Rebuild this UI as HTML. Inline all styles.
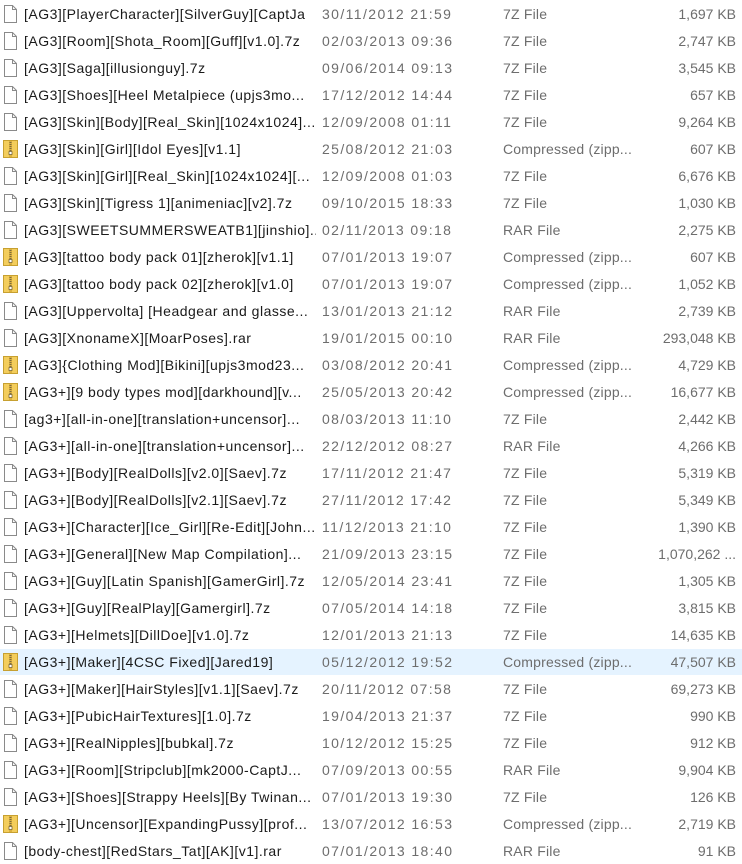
<!DOCTYPE html>
<html><head><meta charset="utf-8"><style>
body{margin:0;width:742px;height:862px;background:#fff;overflow:hidden;font-family:"Liberation Sans",sans-serif;font-size:14px}
.r{position:absolute;left:0;width:742px;height:26px;line-height:26px;white-space:nowrap}
.r.h{background:#e5f3ff}
.i{position:absolute;left:3px;top:4px;width:15px;height:18px}
.n{position:absolute;left:24px;color:#1a1a1a;width:292px;overflow:hidden;letter-spacing:0.5px}
.d{position:absolute;left:322px;color:#6d6d6d;letter-spacing:1.4px}
.t{position:absolute;left:503px;color:#6d6d6d;letter-spacing:0.2px}
.s{position:absolute;right:6px;color:#6d6d6d}
</style></head><body>
<svg width="0" height="0" style="position:absolute"><defs>
<g id="f"><path d="M1.5 0.5h8l4 4v13h-12z" fill="#fff" stroke="#8a8a8a"/><path d="M9.5 0.5v4h4" fill="none" stroke="#8a8a8a"/></g>
<g id="z"><path d="M0.5 0.5h14v17h-14z" fill="#f3cd5c" stroke="#c7a030"/><path d="M6 1h3v16h-3z" fill="#dcb13f"/><path d="M6.5 2h2v1h-2zM6.5 4h2v1h-2zM6.5 6h2v1h-2zM6.5 8h2v1h-2zM6.5 10h2v1h-2z" fill="#7a6a40"/><rect x="6" y="11.5" width="3" height="3" fill="#fff" stroke="#6a5a30" stroke-width="0.7"/></g>
</defs></svg>
<div id="c"></div>
<script>
var rows=[
["f","[AG3][PlayerCharacter][SilverGuy][CaptJa","30/11/2012 21:59","7Z File","1,697 KB"],
["f","[AG3][Room][Shota_Room][Guff][v1.0].7z","02/03/2013 09:36","7Z File","2,747 KB"],
["f","[AG3][Saga][illusionguy].7z","09/06/2014 09:13","7Z File","3,545 KB"],
["f","[AG3][Shoes][Heel Metalpiece (upjs3mo...","17/12/2012 14:44","7Z File","657 KB"],
["f","[AG3][Skin][Body][Real_Skin][1024x1024]...","12/09/2008 01:11","7Z File","9,264 KB"],
["z","[AG3][Skin][Girl][Idol Eyes][v1.1]","25/08/2012 21:03","Compressed (zipp...","607 KB"],
["f","[AG3][Skin][Girl][Real_Skin][1024x1024][...","12/09/2008 01:03","7Z File","6,676 KB"],
["f","[AG3][Skin][Tigress 1][animeniac][v2].7z","09/10/2015 18:33","7Z File","1,030 KB"],
["f","[AG3][SWEETSUMMERSWEATB1][jinshio]...","02/11/2013 09:18","RAR File","2,275 KB"],
["z","[AG3][tattoo body pack 01][zherok][v1.1]","07/01/2013 19:07","Compressed (zipp...","607 KB"],
["z","[AG3][tattoo body pack 02][zherok][v1.0]","07/01/2013 19:07","Compressed (zipp...","1,052 KB"],
["f","[AG3][Uppervolta] [Headgear and glasse...","13/01/2013 21:12","RAR File","2,739 KB"],
["f","[AG3][XnonameX][MoarPoses].rar","19/01/2015 00:10","RAR File","293,048 KB"],
["z","[AG3]{Clothing Mod][Bikini][upjs3mod23...","03/08/2012 20:41","Compressed (zipp...","4,729 KB"],
["z","[AG3+][9 body types mod][darkhound][v...","25/05/2013 20:42","Compressed (zipp...","16,677 KB"],
["f","[ag3+][all-in-one][translation+uncensor]...","08/03/2013 11:10","7Z File","2,442 KB"],
["f","[AG3+][all-in-one][translation+uncensor]...","22/12/2012 08:27","RAR File","4,266 KB"],
["f","[AG3+][Body][RealDolls][v2.0][Saev].7z","17/11/2012 21:47","7Z File","5,319 KB"],
["f","[AG3+][Body][RealDolls][v2.1][Saev].7z","27/11/2012 17:42","7Z File","5,349 KB"],
["f","[AG3+][Character][Ice_Girl][Re-Edit][John...","11/12/2013 21:10","7Z File","1,390 KB"],
["f","[AG3+][General][New Map Compilation]...","21/09/2013 23:15","7Z File","1,070,262 ..."],
["f","[AG3+][Guy][Latin Spanish][GamerGirl].7z","12/05/2014 23:41","7Z File","1,305 KB"],
["f","[AG3+][Guy][RealPlay][Gamergirl].7z","07/05/2014 14:18","7Z File","3,815 KB"],
["f","[AG3+][Helmets][DillDoe][v1.0].7z","12/01/2013 21:13","7Z File","14,635 KB"],
["z","[AG3+][Maker][4CSC Fixed][Jared19]","05/12/2012 19:52","Compressed (zipp...","47,507 KB"],
["f","[AG3+][Maker][HairStyles][v1.1][Saev].7z","20/11/2012 07:58","7Z File","69,273 KB"],
["f","[AG3+][PubicHairTextures][1.0].7z","19/04/2013 21:37","7Z File","990 KB"],
["f","[AG3+][RealNipples][bubkal].7z","10/12/2012 15:25","7Z File","912 KB"],
["f","[AG3+][Room][Stripclub][mk2000-CaptJ...","07/09/2013 00:55","RAR File","9,904 KB"],
["f","[AG3+][Shoes][Strappy Heels][By Twinan...","07/01/2013 19:30","7Z File","126 KB"],
["z","[AG3+][Uncensor][ExpandingPussy][prof...","13/07/2012 16:53","Compressed (zipp...","2,719 KB"],
["f","[body-chest][RedStars_Tat][AK][v1].rar","07/01/2013 18:40","RAR File","91 KB"]];
var h="";
rows.forEach(function(r,i){
h+='<div class="r'+(i==24?' h':'')+'" style="top:'+(1+27*i)+'px"><svg class="i" viewBox="0 0 15 18"><use href="#'+r[0]+'"/></svg><span class="n">'+r[1]+'</span><span class="d">'+r[2]+'</span><span class="t">'+r[3]+'</span><span class="s">'+r[4]+'</span></div>';
});
document.getElementById("c").innerHTML=h;
</script>
</body></html>
